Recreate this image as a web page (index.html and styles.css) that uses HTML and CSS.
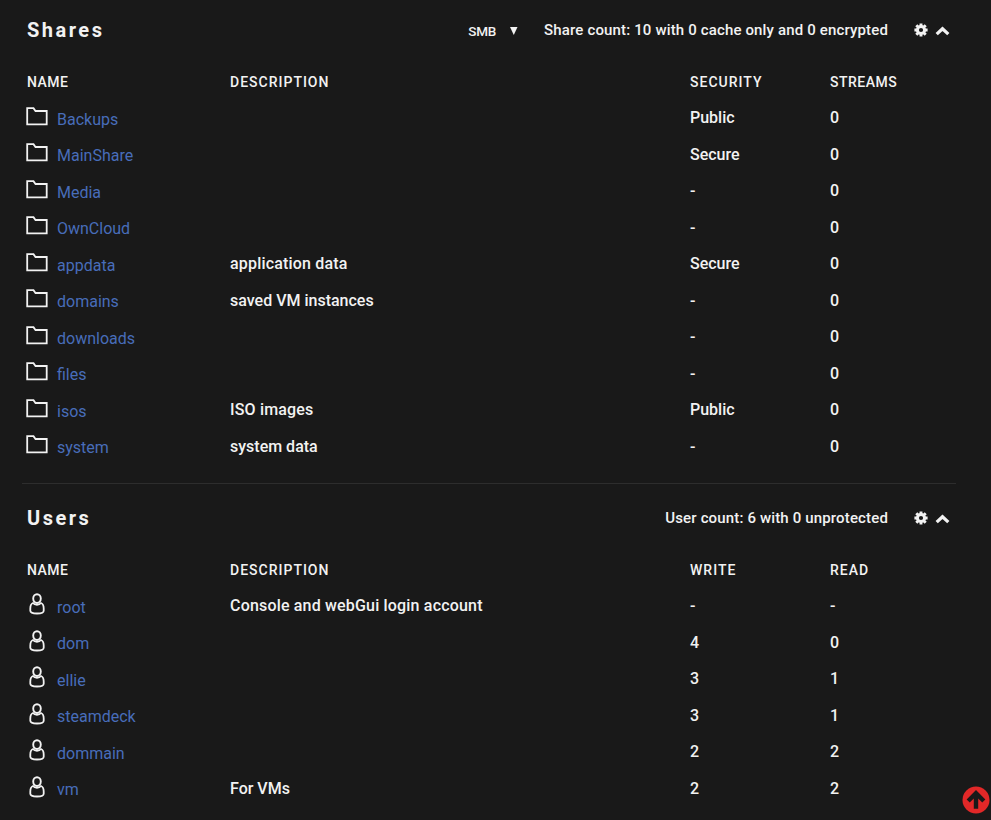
FILE: index.html
```html
<!DOCTYPE html>
<html lang="en">
<head>
<meta charset="utf-8">
<title>Shares and Users</title>
<link rel="stylesheet" href="styles.css">
</head>
<body>
<svg class="defs" aria-hidden="true">
<symbol id="folder" viewBox="0 0 22 19"><path d="M1.2 1.200H7.500L9.500 4h11.200v13.300H1.200Z" fill="none" stroke="currentColor" stroke-width="1.8"/></symbol>
<symbol id="user" viewBox="0 0 16 22"><path d="M4 10C2 10.800 1.300 13 1.300 15.500v2.300c0 2 1.700 2.700 6.700 2.700s6.700-.7 6.700-2.700v-2.300c0-2.500-.7-4.700-2.700-5.500C10.300 12.300 5.700 12.300 4 10Z" fill="none" stroke="currentColor" stroke-width="1.8"/><ellipse cx="8" cy="5.600" rx="3.800" ry="4.400" fill="#191919" stroke="currentColor" stroke-width="1.9"/></symbol>
<symbol id="gear" viewBox="0 0 14 14"><path fill="none" stroke="currentColor" stroke-width="3" d="M7 3.400a3.600 3.600 0 1 1 0 7.200a3.600 3.600 0 1 1 0-7.200Z"/><path stroke="currentColor" stroke-width="2.900" d="M7 .4v2.800M7 10.800v2.800M.4 7h2.800M10.800 7h2.800M2.300 2.300l2 2M9.700 9.700l2 2M2.300 11.700l2-2M9.700 4.300l2-2"/></symbol>
<symbol id="chevron" viewBox="0 0 16 10"><path d="m1.800 8.300 6.200-5.700 6.200 5.700" fill="none" stroke="currentColor" stroke-width="3.500"/></symbol>
</svg>
<main>
<section class="panel shares">
<header class="bar"><h2>Shares</h2><span class="select">SMB<svg viewBox="0 0 8 9"><path d="M0 0h7.500L3.750 8Z"/></svg></span><span class="count">Share count: 10 with 0 cache only and 0 encrypted</span><svg class="gear"><use href="#gear"/></svg><svg class="chev"><use href="#chevron"/></svg></header>
<div class="row head"><span class="tight">NAME</span><span>DESCRIPTION</span><span>SECURITY</span><span class="tight">STREAMS</span></div>
<div class="row"><a><svg><use href="#folder"/></svg><b>Backups</b></a><span></span><span>Public</span><span>0</span></div>
<div class="row"><a><svg><use href="#folder"/></svg><b>MainShare</b></a><span></span><span>Secure</span><span>0</span></div>
<div class="row"><a><svg><use href="#folder"/></svg><b>Media</b></a><span></span><span class="dash">-</span><span>0</span></div>
<div class="row"><a><svg><use href="#folder"/></svg><b>OwnCloud</b></a><span></span><span class="dash">-</span><span>0</span></div>
<div class="row"><a><svg><use href="#folder"/></svg><b>appdata</b></a><span class="loose">application data</span><span>Secure</span><span>0</span></div>
<div class="row"><a><svg><use href="#folder"/></svg><b>domains</b></a><span>saved VM instances</span><span class="dash">-</span><span>0</span></div>
<div class="row"><a><svg><use href="#folder"/></svg><b>downloads</b></a><span></span><span class="dash">-</span><span>0</span></div>
<div class="row"><a><svg><use href="#folder"/></svg><b>files</b></a><span></span><span class="dash">-</span><span>0</span></div>
<div class="row"><a><svg><use href="#folder"/></svg><b>isos</b></a><span class="loose">ISO images</span><span>Public</span><span>0</span></div>
<div class="row"><a><svg><use href="#folder"/></svg><b>system</b></a><span>system data</span><span class="dash">-</span><span>0</span></div>
</section>
<section class="panel users">
<header class="bar"><h2>Users</h2><span class="count">User count: 6 with 0 unprotected</span><svg class="gear"><use href="#gear"/></svg><svg class="chev"><use href="#chevron"/></svg></header>
<div class="row head"><span class="tight">NAME</span><span>DESCRIPTION</span><span>WRITE</span><span>READ</span></div>
<div class="row"><a><svg><use href="#user"/></svg><b>root</b></a><span class="loose">Console and webGui login account</span><span class="dash">-</span><span class="dash">-</span></div>
<div class="row"><a><svg><use href="#user"/></svg><b>dom</b></a><span></span><span>4</span><span>0</span></div>
<div class="row"><a><svg><use href="#user"/></svg><b>ellie</b></a><span></span><span>3</span><span>1</span></div>
<div class="row"><a><svg><use href="#user"/></svg><b>steamdeck</b></a><span></span><span>3</span><span>1</span></div>
<div class="row"><a><svg><use href="#user"/></svg><b>dommain</b></a><span></span><span>2</span><span>2</span></div>
<div class="row"><a><svg><use href="#user"/></svg><b>vm</b></a><span>For VMs</span><span>2</span><span>2</span></div>
</section>
</main>
<svg class="to-top" viewBox="0 0 28 28"><circle cx="14" cy="14" r="13.500" fill="#e22828"/><path d="M14 22.800V8M6.200 15 14 7.200l7.800 7.800" fill="none" stroke="#191919" stroke-width="4.400"/></svg>
</body>
</html>
```
FILE: styles.css
```css
body { margin: 0; height: 820px; overflow: hidden; background: #191919; color: #f2f2f2; font: 500 16px/20px Roboto, sans-serif; }
.defs { position: absolute; width: 0; height: 0; }
main { width: 934px; margin-left: 22px; }
.panel { box-sizing: border-box; padding-left: 5px; }
.shares { height: 483px; }
.users { border-top: 1px solid #2d2d2d; }
.bar { display: flex; align-items: center; height: 60px; padding-right: 6px; }
.users .bar { height: 64px; padding-top: 4px; box-sizing: border-box; }
h2 { margin: 0 auto 0 0; font-size: 20px; font-weight: 700; letter-spacing: 2.5px; }
.select { display: flex; align-items: center; font-size: 13.5px; letter-spacing: -.2px; margin: 2px 26px 0 0; }
.select svg { width: 8px; height: 9px; margin-left: 14px; fill: #f2f2f2; }
.count { font-size: 15px; letter-spacing: .15px; white-space: nowrap; }
.gear { width: 14px; height: 14px; margin: 0 7px 0 26px; }
.chev { width: 15px; height: 10px; margin-top: 2px; }
.row { display: grid; grid-template-columns: 203px 460px 140px 1fr; align-items: center; height: 36.5px; white-space: nowrap; }
.head { height: 35px; padding: 4px 0 1px; font-size: 14px; letter-spacing: 1px; }
.head .tight { letter-spacing: .5px; }
.loose { letter-spacing: .18px; }
.row a { display: flex; align-items: center; color: #486dba; }
.row a svg { width: 22px; height: 19px; margin: -4px 7px 0 -1px; color: #f2f2f2; }
.users .row a svg { height: 22px; }
.row b { font-weight: 400; margin-top: 3px; margin-left: 2px; }
.to-top { position: absolute; left: 961.5px; top: 786px; width: 28px; height: 28px; }
```
